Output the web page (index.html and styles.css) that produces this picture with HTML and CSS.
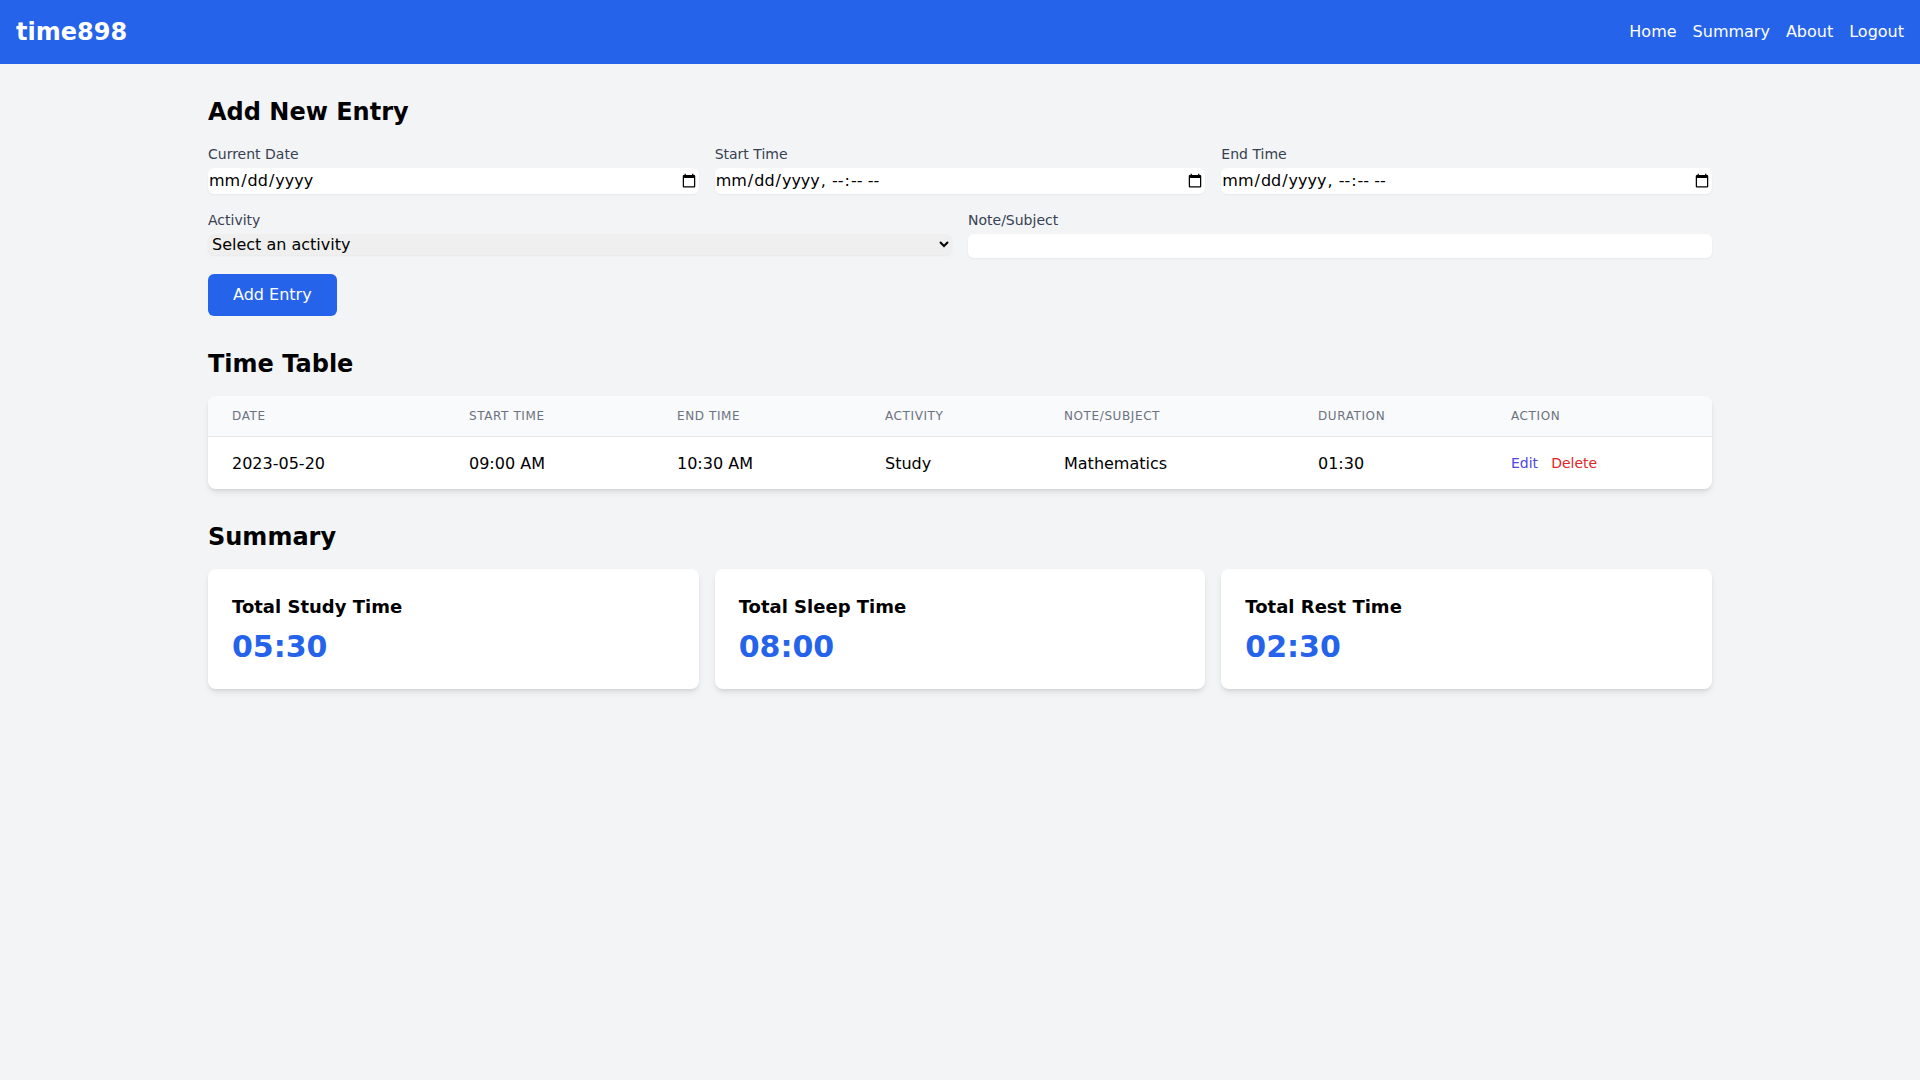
FILE: index.html
```html
<!DOCTYPE html>
<html lang="en">
<head>
    <meta charset="UTF-8">
    <meta name="viewport" content="width=device-width, initial-scale=1.0">
    <title>time898</title>
    <link rel="stylesheet" href="styles.css">
</head>
<body>
    <nav class="navbar">
        <a class="brand" href="#">time898</a>
        <div class="nav-links">
            <a href="#">Home</a>
            <a href="#">Summary</a>
            <a href="#">About</a>
            <a href="#">Logout</a>
        </div>
    </nav>

    <main class="container">
        <section class="section">
            <h2 class="section-title">Add New Entry</h2>
            <form class="entry-form" onsubmit="return false;">
                <div class="form-row cols-3">
                    <div class="field">
                        <label for="currentDate">Current Date</label>
                        <input type="date" id="currentDate" class="date-input">
                    </div>
                    <div class="field">
                        <label for="startTime">Start Time</label>
                        <input type="datetime-local" id="startTime" class="date-input">
                    </div>
                    <div class="field">
                        <label for="endTime">End Time</label>
                        <input type="datetime-local" id="endTime" class="date-input">
                    </div>
                </div>
                <div class="form-row cols-2">
                    <div class="field">
                        <label for="activity">Activity</label>
                        <select id="activity" class="select-input">
                            <option value="">Select an activity</option>
                            <option value="study">Study</option>
                            <option value="sleep">Sleep</option>
                            <option value="rest">Rest</option>
                        </select>
                    </div>
                    <div class="field">
                        <label for="note">Note/Subject</label>
                        <input type="text" id="note" class="text-input">
                    </div>
                </div>
                <button type="submit" class="add-btn">Add Entry</button>
            </form>
        </section>

        <section class="section">
            <h2 class="section-title">Time Table</h2>
            <div class="table-card">
                <table class="time-table">
                    <thead>
                        <tr>
                            <th class="col-date">Date</th>
                            <th class="col-start">Start Time</th>
                            <th class="col-end">End Time</th>
                            <th class="col-activity">Activity</th>
                            <th class="col-note">Note/Subject</th>
                            <th class="col-duration">Duration</th>
                            <th>Action</th>
                        </tr>
                    </thead>
                    <tbody>
                        <tr>
                            <td>2023-05-20</td>
                            <td>09:00 AM</td>
                            <td>10:30 AM</td>
                            <td>Study</td>
                            <td>Mathematics</td>
                            <td>01:30</td>
                            <td class="actions"><a href="#" class="edit-link">Edit</a><a href="#" class="delete-link">Delete</a></td>
                        </tr>
                    </tbody>
                </table>
            </div>
        </section>

        <section class="section">
            <h2 class="section-title">Summary</h2>
            <div class="summary-grid">
                <div class="summary-card">
                    <h3>Total Study Time</h3>
                    <p class="summary-value">05:30</p>
                </div>
                <div class="summary-card">
                    <h3>Total Sleep Time</h3>
                    <p class="summary-value">08:00</p>
                </div>
                <div class="summary-card">
                    <h3>Total Rest Time</h3>
                    <p class="summary-value">02:30</p>
                </div>
            </div>
        </section>
    </main>
</body>
</html>
```

FILE: styles.css
```css
* {
    box-sizing: border-box;
}

body {
    font-family: "DejaVu Sans", "Noto Sans", sans-serif;
    font-size: 16px;
    line-height: 24px;
    margin: 0;
    background-color: #f3f4f6;
    color: #000;
}

a {
    text-decoration: none;
}

/* top bar */
.navbar {
    display: flex;
    justify-content: space-between;
    align-items: center;
    padding: 16px;
    background-color: #2563eb;
    color: white;
}

.brand {
    color: white;
    font-size: 24px;
    line-height: 32px;
    font-weight: bold;
}

.nav-links {
    display: flex;
    gap: 16px;
}

.nav-links a {
    color: white;
}

/* page body */
.container {
    max-width: 1536px;
    margin: 32px auto;
    padding: 0 16px;
}

.section {
    margin-bottom: 32px;
}

.section-title {
    font-size: 24px;
    line-height: 32px;
    font-weight: bold;
    margin: 0 0 16px;
}

/* entry form */
.form-row {
    display: grid;
    gap: 16px;
    margin-bottom: 16px;
}

.cols-3 {
    grid-template-columns: repeat(3, 1fr);
}

.cols-2 {
    grid-template-columns: repeat(2, 1fr);
}

.field label {
    display: block;
    font-size: 14px;
    line-height: 20px;
    color: #374151;
}

.date-input,
.text-input,
.select-input {
    display: block;
    width: 100%;
    margin-top: 4px;
    border: none;
    border-radius: 6px;
    font-family: inherit;
    font-size: 16px;
    line-height: 24px;
    color: #000;
    box-shadow: 0 1px 2px rgba(0, 0, 0, 0.05);
}

.date-input,
.text-input {
    padding: 0;
    background-color: white;
}

.date-input {
    height: 26px;
}

.text-input {
    height: 24px;
}

.select-input {
    height: 21px;
    padding: 0;
    background-color: #efefef;
}

.add-btn {
    background-color: #2563eb;
    color: white;
    border: none;
    border-radius: 6px;
    padding: 9px 25px;
    font-family: inherit;
    font-size: 16px;
    line-height: 24px;
    cursor: pointer;
}

.add-btn:hover {
    background-color: #1d4ed8;
}

/* time table */
.table-card {
    background-color: white;
    border-radius: 8px;
    box-shadow: 0 4px 6px -1px rgba(0, 0, 0, 0.1), 0 2px 4px -2px rgba(0, 0, 0, 0.1);
    overflow: hidden;
}

.time-table {
    width: 100%;
    border-collapse: collapse;
    table-layout: fixed;
}

.time-table th {
    background-color: #f9fafb;
    padding: 12px 24px;
    font-size: 12px;
    line-height: 16px;
    font-weight: normal;
    letter-spacing: 0.05em;
    text-transform: uppercase;
    text-align: left;
    color: #6b7280;
    border-bottom: 1px solid #e5e7eb;
}

.time-table td {
    padding: 15px 24px 13px;
    white-space: nowrap;
}

.col-date { width: 237px; }
.col-start { width: 208px; }
.col-end { width: 208px; }
.col-activity { width: 179px; }
.col-note { width: 254px; }
.col-duration { width: 193px; }

.time-table td.actions {
    font-size: 14px;
    line-height: 20px;
    padding-top: 14px;
    padding-bottom: 14px;
}

.edit-link {
    color: #4f46e5;
    margin-right: 13px;
}

.delete-link {
    color: #dc2626;
}

/* summary cards */
.summary-grid {
    display: grid;
    grid-template-columns: repeat(3, 1fr);
    gap: 16px;
}

.summary-card {
    background-color: white;
    border-radius: 8px;
    padding: 24px;
    box-shadow: 0 4px 6px -1px rgba(0, 0, 0, 0.1), 0 2px 4px -2px rgba(0, 0, 0, 0.1);
}

.summary-card h3 {
    margin: 0;
    font-size: 18px;
    line-height: 28px;
    font-weight: bold;
}

.summary-value {
    margin: 8px 0 0;
    font-size: 30px;
    line-height: 36px;
    font-weight: bold;
    color: #2563eb;
}
```
